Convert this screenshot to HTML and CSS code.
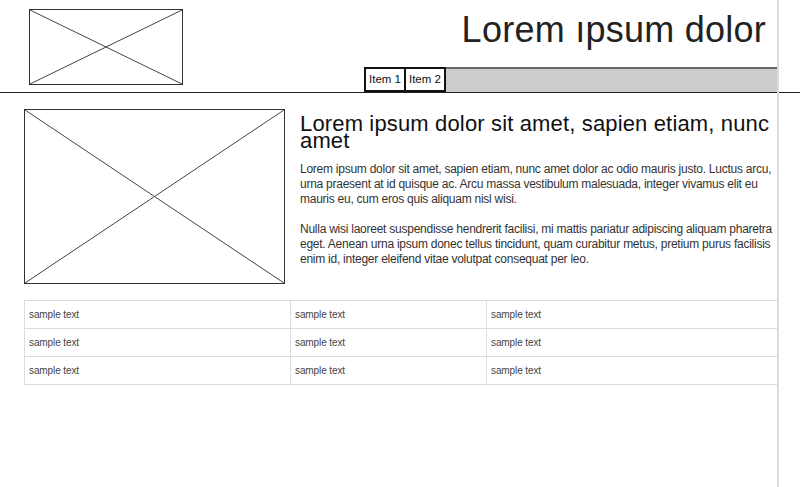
FILE: index.html
```html
<!DOCTYPE html>
<html lang="en">
<head>
    <meta charset="UTF-8">
    <meta name="viewport" content="width=device-width, initial-scale=1.0">
    <title>Lorem ipsum dolor</title>
    <link rel="stylesheet" href="styles.css">
</head>
<body>
    <header class="site-header">
        <div class="logo">
            <svg class="placeholder" viewBox="0 0 100 100" preserveAspectRatio="none">
                <line x1="0" y1="0" x2="100" y2="100" vector-effect="non-scaling-stroke"/>
                <line x1="100" y1="0" x2="0" y2="100" vector-effect="non-scaling-stroke"/>
            </svg>
        </div>
        <div class="header-right">
            <h1 class="site-title">Lorem ıpsum dolor</h1>
            <nav class="main-nav">
                <a href="#" class="nav-item">Item 1</a>
                <a href="#" class="nav-item">Item 2</a>
                <span class="nav-fill"></span>
            </nav>
        </div>
    </header>

    <div class="content">
        <section class="intro">
            <div class="intro-image">
                <svg class="placeholder" viewBox="0 0 100 100" preserveAspectRatio="none">
                    <line x1="0" y1="0" x2="100" y2="100" vector-effect="non-scaling-stroke"/>
                    <line x1="100" y1="0" x2="0" y2="100" vector-effect="non-scaling-stroke"/>
                </svg>
            </div>
            <div class="intro-text">
                <h2>Lorem ipsum dolor sit amet, sapien etiam, nunc amet</h2>
                <p>Lorem ipsum dolor sit amet, sapien etiam, nunc amet dolor ac odio mauris justo. Luctus arcu, urna praesent at id quisque ac. Arcu massa vestibulum malesuada, integer vivamus elit eu mauris eu, cum eros quis aliquam nisl wisi.</p>
                <p>Nulla wisi laoreet suspendisse hendrerit facilisi, mi mattis pariatur adipiscing aliquam pharetra eget. Aenean urna ipsum donec tellus tincidunt, quam curabitur metus, pretium purus facilisis enim id, integer eleifend vitae volutpat consequat per leo.</p>
            </div>
        </section>

        <table class="data-table">
            <colgroup>
                <col class="col-a">
                <col class="col-b">
                <col>
            </colgroup>
            <tr><td>sample text</td><td>sample text</td><td>sample text</td></tr>
            <tr><td>sample text</td><td>sample text</td><td>sample text</td></tr>
            <tr><td>sample text</td><td>sample text</td><td>sample text</td></tr>
        </table>
    </div>
</body>
</html>
```

FILE: styles.css
```css
body {
    font-family: 'Liberation Sans', Arial, sans-serif;
    margin: 0;
    padding: 0;
    color: #222;
    background: #ffffff;
}
/* page edge line */
body::after {
    content: "";
    position: fixed;
    top: 0;
    bottom: 0;
    left: 777px;
    width: 2px;
    background: #dcdcdc;
}
.placeholder {
    display: block;
    width: 100%;
    height: 100%;
}
.placeholder line {
    stroke: #444;
    stroke-width: 1;
}
.site-header {
    display: flex;
    padding-top: 9px;
    border-bottom: 1px solid #222;
}
.logo {
    margin-left: 29px;
    width: 154px;
    height: 76px;
    border: 1px solid #333;
    box-sizing: border-box;
}
.header-right {
    flex: 1;
    display: flex;
    flex-direction: column;
    margin-right: 23px;
}
.site-title {
    font-size: 36px;
    font-weight: normal;
    line-height: 41px;
    letter-spacing: 0.25px;
    margin: 0 0 17px;
    padding-right: 11px;
    text-align: right;
    color: #222;
}
.main-nav {
    display: flex;
    align-self: flex-end;
    width: 413px;
    height: 25px;
}
.nav-item {
    box-sizing: border-box;
    height: 25px;
    padding: 0 3px;
    border: 2px solid #111;
    font-size: 11.5px;
    line-height: 21px;
    color: #111;
    text-decoration: none;
    background: #fff;
}
.nav-item + .nav-item {
    margin-left: -2px;
}
.nav-fill {
    flex: 1;
    background: #cccccc;
    border-top: 2px solid #666;
}
.content {
    width: 778px;
}
.intro {
    display: flex;
    gap: 15px;
    padding: 16px 4px 0 24px;
}
.intro-image {
    flex: none;
    width: 261px;
    height: 175px;
    border: 1px solid #333;
    box-sizing: border-box;
}
.intro-text {
    flex: 1;
}
.intro-text h2 {
    font-size: 22px;
    font-weight: normal;
    line-height: 16.5px;
    letter-spacing: 0.15px;
    margin: 7px 0 13px;
    color: #111;
}
.intro-text p {
    font-size: 12px;
    line-height: 15px;
    letter-spacing: -0.25px;
    margin: 0 0 15px;
    color: #333;
}
.data-table {
    margin: 16px 0 0 24px;
    width: 754px;
    border-collapse: collapse;
}
.col-a { width: 266px; }
.col-b { width: 196px; }
.data-table td {
    border: 1px solid #dddddd;
    height: 27px;
    padding: 0 4px;
    font-size: 10px;
    letter-spacing: -0.1px;
    color: #444;
    vertical-align: middle;
}
```
